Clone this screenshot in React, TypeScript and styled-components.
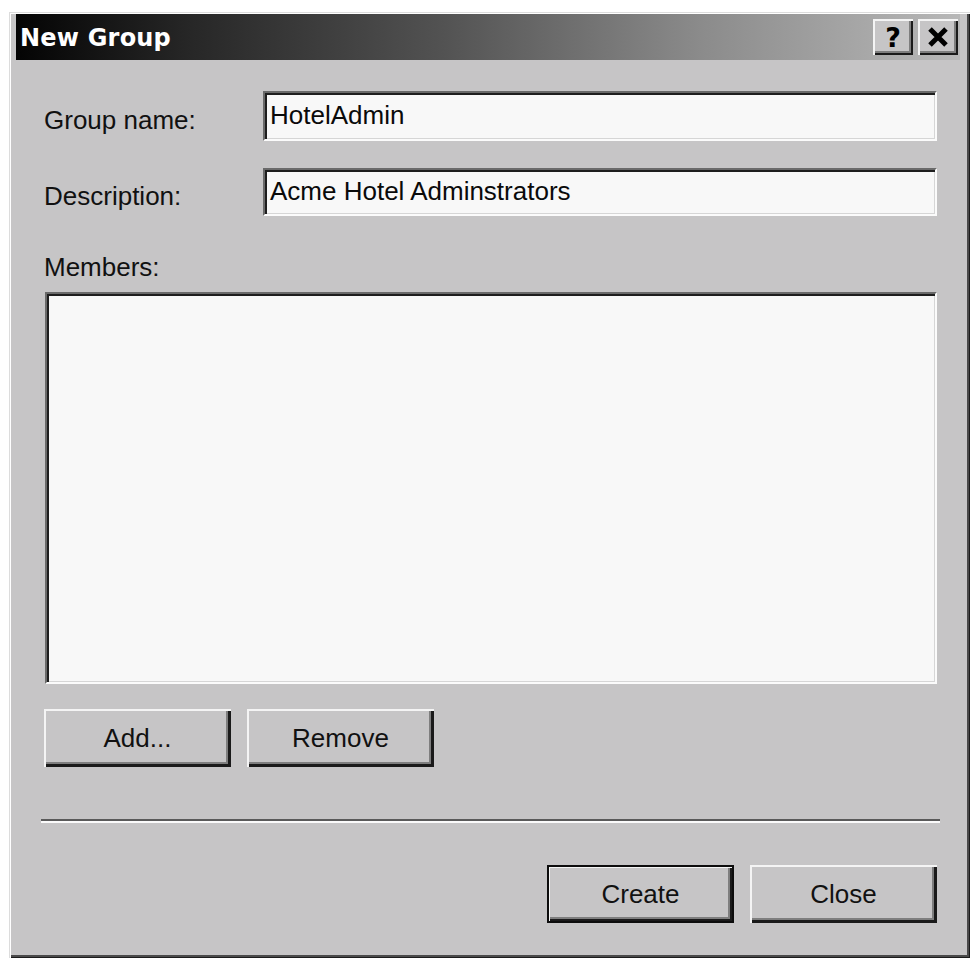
import React from 'react'
import styled, { createGlobalStyle } from 'styled-components'

const GlobalStyle = createGlobalStyle`
  html, body {
    margin: 0;
    padding: 0;
    background: #ffffff;
  }
  body {
    font-family: "Liberation Sans", Arial, sans-serif;
  }
`

const Dialog = styled.div`
  box-sizing: border-box;
  margin: 12px 0 0 9px;
  width: 961px;
  height: 946px;
  background: #c6c5c6;
  padding: 2px 10px 0 7px;
  display: flex;
  flex-direction: column;
  box-shadow:
    inset 1px 1px 0 #dcdcdc,
    inset 2px 2px 0 #ffffff,
    inset -1px -1px 0 #1c1c1c,
    inset -3px -3px 0 #4a4a4a;
`

const TitleBar = styled.div`
  height: 46px;
  flex: none;
  display: flex;
  align-items: center;
  padding: 0 2px 0 4px;
  background: linear-gradient(to right, #040404 0%, #262626 18%, #525252 45%, #8a8a8a 72%, #b8b8b8 100%);
`

const Title = styled.div`
  flex: 1;
  color: #ffffff;
  font-family: "DejaVu Sans", Verdana, sans-serif;
  font-weight: bold;
  font-size: 24px;
  letter-spacing: 0.2px;
  padding-top: 2px;
`

const CaptionButtons = styled.div`
  display: flex;
  gap: 5px;
  align-items: center;
`

const CaptionButton = styled.div`
  box-sizing: border-box;
  width: 40px;
  height: 36px;
  background: #c6c5c6;
  display: flex;
  align-items: center;
  justify-content: center;
  color: #000;
  font-family: "DejaVu Sans", sans-serif;
  font-weight: bold;
  font-size: 27px;
  box-shadow:
    inset 2px 2px 0 #f4f4f4,
    inset -2px -2px 0 #1a1a1a,
    inset -4px -4px 0 #7e7e7e;
`

const Body = styled.div`
  flex: 1;
  display: flex;
  flex-direction: column;
  padding: 31px 23px 0 28px;
`

const FieldRow = styled.div<{ $gap: number }>`
  display: grid;
  grid-template-columns: 219px 1fr;
  align-items: center;
  margin-bottom: ${p => p.$gap}px;
`

const Label = styled.div`
  font-size: 26px;
  color: #111;
  padding-top: 9px;
`

const TextBox = styled.div<{ $h: number }>`
  box-sizing: border-box;
  height: ${p => p.$h}px;
  background: #f8f8f8;
  border-style: solid;
  border-width: 2px;
  border-color: #6a6a6a #fbfbfb #fbfbfb #6a6a6a;
  box-shadow: inset 2px 2px 0 #1e1e1e, inset -1px -1px 0 #d6d6d6;
  display: flex;
  align-items: center;
  padding: 0 0 2px 5px;
  font-size: 26px;
  color: #0a0a0a;
`

const MembersLabel = styled(Label)`
  padding: 0;
  margin: 0 0 10px 0;
  line-height: 30px;
`

const ListBox = styled(TextBox)`
  margin-left: 1px;
`

const ButtonRow = styled.div<{ $end?: boolean; $top?: number }>`
  display: flex;
  gap: 16px;
  margin-top: ${p => p.$top ?? 0}px;
  justify-content: ${p => (p.$end ? 'flex-end' : 'flex-start')};
`

const Button = styled.div<{ $default?: boolean }>`
  box-sizing: border-box;
  width: 187px;
  height: 58px;
  display: flex;
  align-items: center;
  justify-content: center;
  font-size: 26px;
  color: #111;
  background: #c6c5c6;
  box-shadow: ${p =>
    p.$default
      ? 'inset 0 0 0 2px #0c0c0c, inset 3px 3px 0 #f4f4f4, inset -4px -4px 0 #1a1a1a, inset -6px -6px 0 #7e7e7e'
      : 'inset 2px 2px 0 #f4f4f4, inset -3px -3px 0 #1a1a1a, inset -5px -5px 0 #7e7e7e'};
`

const Separator = styled.div`
  margin: 52px -3px 42px -3px;
  height: 0;
  border-top: 2px solid #5a5a5a;
  border-bottom: 2px solid #fafafa;
`

const CloseGlyph = () => (
  <svg width="22" height="20" viewBox="0 0 22 20">
    <path d="M3 2 L19 18 M19 2 L3 18" stroke="#000" strokeWidth="5" />
  </svg>
)

export default function App() {
  return (
    <>
      <GlobalStyle />
      <Dialog>
        <TitleBar>
          <Title>New Group</Title>
          <CaptionButtons>
            <CaptionButton>?</CaptionButton>
            <CaptionButton>
              <CloseGlyph />
            </CaptionButton>
          </CaptionButtons>
        </TitleBar>
        <Body>
          <FieldRow $gap={27}>
            <Label>Group name:</Label>
            <TextBox $h={50}>HotelAdmin</TextBox>
          </FieldRow>
          <FieldRow $gap={36}>
            <Label>Description:</Label>
            <TextBox $h={48}>Acme Hotel Adminstrators</TextBox>
          </FieldRow>
          <MembersLabel>Members:</MembersLabel>
          <ListBox $h={392} />
          <ButtonRow $top={25}>
            <Button>Add...</Button>
            <Button>Remove</Button>
          </ButtonRow>
          <Separator />
          <ButtonRow $end>
            <Button $default>Create</Button>
            <Button>Close</Button>
          </ButtonRow>
        </Body>
      </Dialog>
    </>
  )
}
